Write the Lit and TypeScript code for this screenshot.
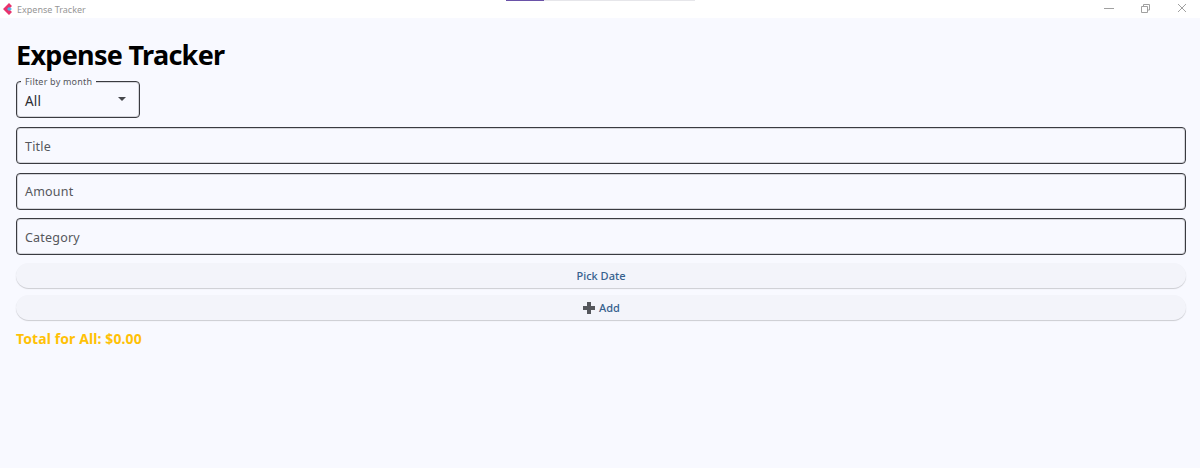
import { LitElement, html, css } from 'lit';
import { customElement } from 'lit/decorators.js';

@customElement('app-root')
export class AppRoot extends LitElement {
  static styles = css`
    :host {
      display: block;
      height: 468px;
      overflow: hidden;
      background: #f8f9ff;
      font-family: 'Noto Sans', 'Open Sans', sans-serif;
    }
    :host * {
      box-sizing: border-box;
    }

    .titlebar {
      position: relative;
      height: 18px;
      background: #fff;
      display: flex;
      align-items: center;
      padding-left: 3px;
      font-size: 9px;
      color: #969696;
    }
    .titlebar .logo {
      width: 10px;
      height: 12px;
      margin-right: 4px;
    }
    .progress {
      position: absolute;
      left: 506px;
      top: 0;
      width: 189px;
      height: 1px;
      background: #e6e6ea;
    }
    .progress div {
      width: 38px;
      height: 100%;
      background: #6a52a8;
    }
    .win {
      margin-left: auto;
      display: flex;
      align-items: center;
      gap: 26px;
      padding-right: 14px;
      margin-top: -2px;
    }
    .win svg {
      display: block;
      width: 10px;
      height: 10px;
      fill: none;
      stroke: #a0a0a0;
      stroke-width: 1;
    }

    .content {
      padding: 0 14px 0 16px;
    }
    h1 {
      margin: 0;
      padding-top: 19px;
      height: 63px;
      font-size: 27px;
      line-height: 36px;
      letter-spacing: -0.7px;
      font-weight: 700;
      color: #000;
    }

    .box {
      position: relative;
      display: flex;
      align-items: center;
      border: 1px solid #3a3b40;
      border-radius: 4px;
      box-shadow: inset 0 0 0 1px rgba(70, 70, 75, 0.2);
      padding: 1px 8px 0;
      color: #55575c;
      font-size: 12.5px;
      letter-spacing: 0.2px;
    }
    .select {
      width: 124px;
      height: 37px;
      margin-bottom: 9px;
      padding-top: 2px;
      color: #2a2b30;
      font-size: 13.5px;
      justify-content: space-between;
    }
    .select label {
      position: absolute;
      left: 4px;
      top: -6px;
      padding: 0 4px;
      background: #f8f9ff;
      font-size: 9px;
      line-height: 12px;
      letter-spacing: 0.2px;
      color: #55575c;
    }
    .arrow {
      width: 0;
      height: 0;
      margin-right: 5px;
      margin-bottom: 3px;
      border-left: 4px solid transparent;
      border-right: 4px solid transparent;
      border-top: 4px solid #45474c;
    }
    .field {
      height: 37px;
      margin-bottom: 8.5px;
    }
    .field.last {
      margin-bottom: 8px;
    }

    .btn {
      display: flex;
      align-items: center;
      justify-content: center;
      gap: 3px;
      height: 25px;
      margin-bottom: 7px;
      border-radius: 13px;
      background: #f3f4fa;
      box-shadow: 0 1px 1px rgba(0, 0, 0, 0.18);
      color: #36618e;
      font-size: 11px;
      font-weight: 500;
    }
    .btn svg {
      width: 14px;
      height: 14px;
      fill: #55575c;
    }

    .total {
      margin-top: 9px;
      font-size: 14px;
      line-height: 19px;
      letter-spacing: 0.1px;
      font-weight: 700;
      color: #ffc107;
    }
  `;

  render() {
    return html`
      <div class="titlebar">
        <svg class="logo" viewBox="0 0 10 12">
          <polygon points="6,0 0,6 6,12 9,9 6,6 9,3" fill="#e8336d"></polygon>
          <polygon points="6,4 4,6 6,8 9,6" fill="#4fb3e8"></polygon>
        </svg>
        Expense Tracker
        <div class="progress"><div></div></div>
        <div class="win">
          <svg viewBox="0 0 10 10"><path d="M0 5.5H10"></path></svg>
          <svg viewBox="0 0 10 10"><path d="M1.5 3.5H7.5V9.5H1.5ZM3.5 3V1.5H9.5V7H8"></path></svg>
          <svg viewBox="0 0 10 10"><path d="M2 1L10 9M10 1L2 9"></path></svg>
        </div>
      </div>
      <div class="content">
        <h1>Expense Tracker</h1>
        <div class="box select">
          <label>Filter by month</label>
          All
          <span class="arrow"></span>
        </div>
        <div class="box field">Title</div>
        <div class="box field">Amount</div>
        <div class="box field last">Category</div>
        <div class="btn">Pick Date</div>
        <div class="btn">
          <svg viewBox="0 0 14 14"><path d="M5 1H9V5H13V9H9V13H5V9H1V5H5Z"></path></svg>
          Add
        </div>
        <div class="total">Total for All: $0.00</div>
      </div>
    `;
  }
}
